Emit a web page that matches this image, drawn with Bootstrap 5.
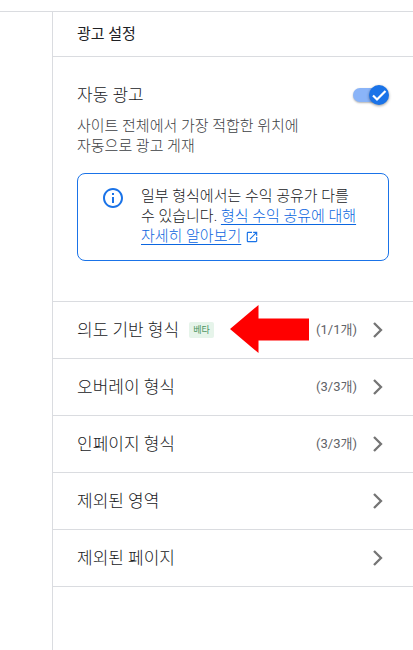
<!DOCTYPE html>
<html lang="ko">
<head>
<meta charset="utf-8">
<meta name="viewport" content="width=device-width, initial-scale=1">
<title>광고 설정</title>
<link href="https://cdn.jsdelivr.net/npm/bootstrap@5.3.0/dist/css/bootstrap.min.css" rel="stylesheet">
<style>
  :root { --line: #dadce0; --ink: #202124; --muted: #5f6368; --blue: #1a73e8; }
  body { font-family: Roboto, "Noto Sans CJK KR", sans-serif; font-size: 15px; font-weight: 300; line-height: 20px; word-break: keep-all; color: var(--ink); background: #fff; }
  .topbar { height: 12px; border-bottom: 1px solid var(--line); }
  .gutter { width: 52px; }
  .panel { border-left: 1px solid var(--line); min-width: 0; }
  .panel-title { font-size: 15px; font-weight: 400; line-height: 20px; color: #202124; padding: 12px 24px; border-bottom: 1px solid var(--line); }
  .auto-ads { padding: 24px 24px 40px; border-bottom: 1px solid var(--line); }
  .item-title { font-size: 17px; line-height: 28px; }
  .desc { color: #3c4043; max-width: 248px; margin-top: 7px; }
  .toggle.form-check-input { width: 36px; height: 20px; margin: 0; border: 0; border-radius: 10px; background: none; position: relative; cursor: pointer; flex: none; }
  .toggle.form-check-input:checked { background: none; }
  .toggle::before { content: ""; position: absolute; left: 0; top: 3px; width: 34px; height: 14px; border-radius: 7px; background: #8ab4f8; box-shadow: 0 1px 2px rgba(0,0,0,.3); }
  .toggle::after { content: ""; position: absolute; right: 0; top: 0; width: 20px; height: 20px; border-radius: 50%; box-shadow: 0 1px 3px rgba(0,0,0,.4);
    background: var(--blue) url("data:image/svg+xml,%3Csvg xmlns='http://www.w3.org/2000/svg' viewBox='0 0 20 20'%3E%3Cpath d='M4 10.5l4 4L16.5 6' fill='none' stroke='white' stroke-width='2.2'/%3E%3C/svg%3E"); }
  .toggle:not(:checked)::after { right: auto; left: 0; background: #fff; }
  .notice { margin-top: 17px; padding: 12px 24px 14px 23px; border: 1px solid var(--blue); border-radius: 8px; gap: 16px; }
  .notice a { color: #0b66e0; text-underline-offset: 3px; }
  .setting { height: 57px; padding: 0 23px 0 24px; border: 0; border-bottom: 1px solid var(--line); background: none; color: var(--ink); font-weight: inherit; }
  .beta { font-size: 9px; font-weight: 400; line-height: 16px; padding: 0 4px; margin-left: 10px; border-radius: 2px; background: #e6f4ea; color: #4b9462; }
  .count { font-size: 13px; font-weight: 400; color: var(--muted); margin-right: 9px; }
  .pointer { left: 177px; top: 3px; }
</style>
<script src="https://cdn.jsdelivr.net/npm/bootstrap@5.3.0/dist/js/bootstrap.bundle.min.js"></script>
</head>
<body class="d-flex flex-column min-vh-100">
<header class="topbar"></header>
<div class="d-flex flex-grow-1">
  <div class="gutter flex-shrink-0"></div>
  <main class="panel flex-grow-1">
    <h1 class="panel-title m-0">광고 설정</h1>
    <section class="auto-ads">
      <div class="d-flex justify-content-between align-items-center">
        <label class="item-title" for="auto">자동 광고</label>
        <input class="form-check-input toggle" type="checkbox" role="switch" id="auto" checked>
      </div>
      <p class="desc mb-0">사이트 전체에서 가장 적합한 위치에 자동으로 광고 게재</p>
      <div class="notice d-flex align-items-start">
        <svg class="flex-shrink-0" width="24" height="24" viewBox="0 0 24 24" fill="#1a73e8" aria-hidden="true"><path d="M11 7h2v2h-2zm0 4h2v6h-2zm1-9C6.480 2 2 6.480 2 12s4.480 10 10 10 10-4.480 10-10S17.520 2 12 2zm0 18c-4.410 0-8-3.590-8-8s3.590-8 8-8 8 3.590 8 8-3.590 8-8 8z"/></svg>
        <p class="mb-0">일부 형식에서는 수익 공유가 다를 수 있습니다. <a href="#">형식 수익 공유에 대해 자세히 알아보기</a> <svg width="14" height="14" viewBox="0 0 24 24" fill="#1a73e8" aria-hidden="true"><path d="M19 19H5V5h7V3H5a2 2 0 0 0-2 2v14a2 2 0 0 0 2 2h14c1.100 0 2-.9 2-2v-7h-2v7zM14 3v2h3.590l-9.830 9.830 1.410 1.410L19 6.410V10h2V3h-7z"/></svg></p>
      </div>
    </section>
    <nav class="position-relative" aria-label="광고 형식">
      <button type="button" class="setting d-flex align-items-center w-100 text-start">
        <span class="item-title">의도 기반 형식</span><span class="beta">베타</span>
        <span class="count ms-auto">(1/1개)</span>
        <svg width="24" height="24" viewBox="0 0 24 24" aria-hidden="true"><path d="M8 5l7 7-7 7" fill="none" stroke="#757575" stroke-width="2.300"/></svg>
      </button>
      <button type="button" class="setting d-flex align-items-center w-100 text-start">
        <span class="item-title">오버레이 형식</span>
        <span class="count ms-auto">(3/3개)</span>
        <svg width="24" height="24" viewBox="0 0 24 24" aria-hidden="true"><path d="M8 5l7 7-7 7" fill="none" stroke="#757575" stroke-width="2.300"/></svg>
      </button>
      <button type="button" class="setting d-flex align-items-center w-100 text-start">
        <span class="item-title">인페이지 형식</span>
        <span class="count ms-auto">(3/3개)</span>
        <svg width="24" height="24" viewBox="0 0 24 24" aria-hidden="true"><path d="M8 5l7 7-7 7" fill="none" stroke="#757575" stroke-width="2.300"/></svg>
      </button>
      <button type="button" class="setting d-flex align-items-center w-100 text-start">
        <span class="item-title me-auto">제외된 영역</span>
        <svg width="24" height="24" viewBox="0 0 24 24" aria-hidden="true"><path d="M8 5l7 7-7 7" fill="none" stroke="#757575" stroke-width="2.300"/></svg>
      </button>
      <button type="button" class="setting d-flex align-items-center w-100 text-start">
        <span class="item-title me-auto">제외된 페이지</span>
        <svg width="24" height="24" viewBox="0 0 24 24" aria-hidden="true"><path d="M8 5l7 7-7 7" fill="none" stroke="#757575" stroke-width="2.300"/></svg>
      </button>
      <svg class="pointer position-absolute pe-none" width="79" height="48" viewBox="0 0 79 48" fill="#f00" aria-hidden="true"><path d="M0 24L28.500 0v13.500H79v22H28.500V48z"/></svg>
    </nav>
  </main>
</div>
</body>
</html>
